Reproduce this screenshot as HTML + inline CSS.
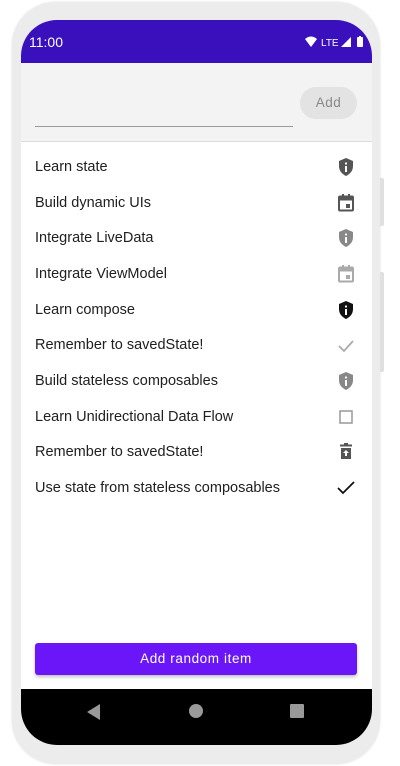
<!DOCTYPE html><html><head><style>
body{margin:0;width:400px;height:766px;background:#fff;position:relative;overflow:hidden;font-family:"Liberation Sans",Roboto,sans-serif}
.frame{position:absolute;left:12px;top:2px;width:368px;height:762px;border-radius:44px;background:#ececec;box-shadow:0 0 2px #ddd}
.sb{position:absolute;left:380px;width:4px;background:#e0e0e0;border-radius:0 2px 2px 0}
.screen{position:absolute;left:21px;top:20px;width:351px;height:725px;border-radius:36px;overflow:hidden;background:#fff}
.status{position:absolute;left:0;top:0;width:351px;height:43px;background:#3a10bd;color:#fff}
.hdr{position:absolute;top:43px;left:0;width:351px;height:78px;background:#f3f3f3;border-bottom:1px solid #ddd}
.row{position:absolute;left:14px;font-size:14.5px;color:#202020}
.ic{position:absolute;left:316px}
.nav{position:absolute;left:0;top:669px;width:351px;height:56px;background:#000}
</style></head><body>
<div class="frame"></div>
<div class="sb" style="top:178px;height:48px"></div>
<div class="sb" style="top:272px;height:100px"></div>
<div class="screen">
<div class="status"><span style="position:absolute;left:8px;top:14px;font-size:14px">11:00</span>
<svg style="position:absolute;left:284px;top:16px" width="60" height="12" viewBox="0 0 60 12"><path d="M0 3 Q6 -2 12 3 L6 11Z" fill="#fff"/><text x="16" y="10" font-size="10" fill="#fff" font-family="Liberation Sans">LTE</text><path d="M36 11 L46 1 V11Z" fill="#fff"/><rect x="52" y="1" width="6" height="10" rx="1" fill="#fff"/><rect x="54" y="0" width="2" height="2" fill="#fff"/></svg></div>
<div class="hdr"><div style="position:absolute;left:14px;top:63px;width:258px;height:1px;background:#9a9a9a"></div>
<div style="position:absolute;left:279px;top:24px;width:57px;height:32px;border-radius:16px;background:#e3e3e3;color:#888;font-size:13.5px;line-height:32px;text-align:center;letter-spacing:.5px">Add</div></div>
<div class="row" style="top:139px">Learn state</div>
<div class="row" style="top:175px">Build dynamic UIs</div>
<div class="row" style="top:210px">Integrate LiveData</div>
<div class="row" style="top:246px">Integrate ViewModel</div>
<div class="row" style="top:282px">Learn compose</div>
<div class="row" style="top:317px">Remember to savedState!</div>
<div class="row" style="top:353px">Build stateless composables</div>
<div class="row" style="top:389px">Learn Unidirectional Data Flow</div>
<div class="row" style="top:424px">Remember to savedState!</div>
<div class="row" style="top:460px">Use state from stateless composables</div>
<svg class="ic" style="top:137px" width="18" height="20" viewBox="0 0 18 20"><path d="M9 1 L16 4 V9 C16 14 13 17 9 19 C5 17 2 14 2 9 V4Z" fill="#555"/><rect x="8" y="9" width="2" height="6" fill="#fff"/><circle cx="9" cy="6.5" r="1.1" fill="#fff"/></svg>
<svg class="ic" style="top:173px" width="18" height="20" viewBox="0 0 18 20"><rect x="2" y="3.5" width="14" height="14" rx="1" fill="none" stroke="#555" stroke-width="2"/><rect x="2" y="3.5" width="14" height="4" fill="#555"/><rect x="5" y="1" width="2" height="3" fill="#555"/><rect x="11" y="1" width="2" height="3" fill="#555"/><rect x="9" y="11" width="4" height="4" fill="#555"/></svg>
<svg class="ic" style="top:208px" width="18" height="20" viewBox="0 0 18 20"><path d="M9 1 L16 4 V9 C16 14 13 17 9 19 C5 17 2 14 2 9 V4Z" fill="#888"/><rect x="8" y="9" width="2" height="6" fill="#fff"/><circle cx="9" cy="6.5" r="1.1" fill="#fff"/></svg>
<svg class="ic" style="top:244px" width="18" height="20" viewBox="0 0 18 20"><rect x="2" y="3.5" width="14" height="14" rx="1" fill="none" stroke="#aaa" stroke-width="2"/><rect x="2" y="3.5" width="14" height="4" fill="#aaa"/><rect x="5" y="1" width="2" height="3" fill="#aaa"/><rect x="11" y="1" width="2" height="3" fill="#aaa"/><rect x="9" y="11" width="4" height="4" fill="#aaa"/></svg>
<svg class="ic" style="top:280px" width="18" height="20" viewBox="0 0 18 20"><path d="M9 1 L16 4 V9 C16 14 13 17 9 19 C5 17 2 14 2 9 V4Z" fill="#111"/><rect x="8" y="9" width="2" height="6" fill="#fff"/><circle cx="9" cy="6.5" r="1.1" fill="#fff"/></svg>
<svg class="ic" style="top:316px" width="18" height="20" viewBox="0 0 18 20"><path d="M2 10 L7 15 L16 5" fill="none" stroke="#aaa" stroke-width="1.8"/></svg>
<svg class="ic" style="top:351px" width="18" height="20" viewBox="0 0 18 20"><path d="M9 1 L16 4 V9 C16 14 13 17 9 19 C5 17 2 14 2 9 V4Z" fill="#888"/><rect x="8" y="9" width="2" height="6" fill="#fff"/><circle cx="9" cy="6.5" r="1.1" fill="#fff"/></svg>
<svg class="ic" style="top:387px" width="18" height="20" viewBox="0 0 18 20"><rect x="3" y="4" width="12" height="12" fill="none" stroke="#999" stroke-width="1.5"/></svg>
<svg class="ic" style="top:422px" width="18" height="20" viewBox="0 0 18 20"><rect x="3" y="2.5" width="12" height="2" fill="#555"/><rect x="7" y="1" width="4" height="2" fill="#555"/><path d="M4 6 H14 V17 H4Z" fill="#555"/><path d="M9 8 L12 11 H10 V14 H8 V11 H6Z" fill="#fff"/></svg>
<svg class="ic" style="top:458px" width="18" height="20" viewBox="0 0 18 20"><path d="M1 10 L6 15 L17 4" fill="none" stroke="#111" stroke-width="1.8"/></svg>
<div style="position:absolute;left:14px;top:623px;width:322px;height:32px;background:#6a16f9;border-radius:3px;box-shadow:0 2px 3px rgba(0,0,0,.25);color:#fff;font-size:13.5px;line-height:32px;text-align:center;letter-spacing:.6px">Add random item</div>
<div class="nav"><svg style="position:absolute;left:66px;top:15px" width="14" height="16"><path d="M0 8 L13 0 V16Z" fill="#999"/></svg>
<div style="position:absolute;left:168px;top:15px;width:14px;height:14px;border-radius:50%;background:#999"></div>
<div style="position:absolute;left:269px;top:15px;width:14px;height:14px;background:#999;border-radius:1px"></div></div>
</div>
</body></html>
